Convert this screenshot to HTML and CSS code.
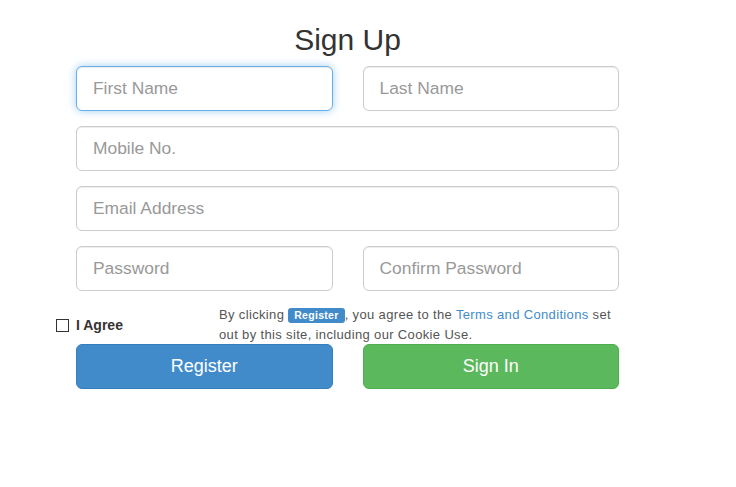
FILE: index.html
```html
<!DOCTYPE html>
<html lang="en">
<head>
<meta charset="utf-8">
<title>Sign Up</title>
<link rel="stylesheet" href="styles.css">
</head>
<body>
<main class="page">
  <h2 class="title">Sign Up</h2>
  <form class="signup-form">
    <div class="row two">
      <input class="field is-focused" type="text" placeholder="First Name">
      <input class="field" type="text" placeholder="Last Name">
    </div>
    <div class="row">
      <input class="field" type="text" placeholder="Mobile No.">
    </div>
    <div class="row">
      <input class="field" type="email" placeholder="Email Address">
    </div>
    <div class="row two">
      <input class="field" type="password" placeholder="Password">
      <input class="field" type="password" placeholder="Confirm Password">
    </div>
    <div class="agree-row">
      <label class="agree"><input class="check" type="checkbox"><span>I Agree</span></label>
      <p class="terms">By clicking <span class="badge">Register</span>, you agree to the <a class="link" href="#">Terms and Conditions</a> set out by this site, including our Cookie Use.</p>
    </div>
    <div class="row two">
      <button class="btn btn-primary" type="button">Register</button>
      <button class="btn btn-success" type="button">Sign In</button>
    </div>
  </form>
</main>
</body>
</html>
```

FILE: styles.css
```css
html, body {
  margin: 0;
  padding: 0;
  background: #fff;
}
body {
  font-family: "Liberation Sans", Arial, Helvetica, sans-serif;
  font-size: 14px;
  line-height: 20px;
  color: #333;
}
.page {
  width: 543px;
  padding: 23px 0 0 76px;
}
.title {
  margin: 0 0 10px;
  font-size: 30px;
  line-height: 33px;
  font-weight: 500;
  text-align: center;
  color: #333;
}
.signup-form {
  display: flex;
  flex-direction: column;
}
.row {
  display: grid;
  grid-template-columns: 1fr;
  margin-bottom: 15px;
}
.row.two {
  grid-template-columns: 1fr 1fr;
  column-gap: 30px;
}
.field {
  box-sizing: border-box;
  height: 45px;
  width: 100%;
  margin: 0;
  padding: 0 16px;
  font-family: "Liberation Sans", Arial, sans-serif;
  font-size: 17.4px;
  color: #555;
  background: #fff;
  border: 1px solid #ccc;
  border-radius: 6px;
  box-shadow: inset 0 1px 1px rgba(0, 0, 0, 0.075);
  outline: none;
}
.field::placeholder {
  color: #999;
}
.field.is-focused {
  border-color: #66afe9;
  box-shadow: inset 0 1px 1px rgba(0, 0, 0, 0.075), 0 0 8px rgba(102, 175, 233, 0.6);
}
.agree-row {
  display: grid;
  grid-template-columns: 143px 1fr;
  margin: -2px 0 0;
  height: 40px;
}
.agree {
  display: flex;
  align-items: center;
  margin-left: -20px;
  padding-top: 1px;
  font-weight: bold;
  font-size: 14px;
}
.check {
  appearance: none;
  -webkit-appearance: none;
  box-sizing: border-box;
  width: 13px;
  height: 13px;
  margin: 0 7px 0 0;
  border: 1px solid #333;
  background: #fff;
}
.terms {
  margin: 0;
  padding-top: 1px;
  font-size: 13px;
  line-height: 20px;
  letter-spacing: 0.35px;
  color: #555;
}
.badge {
  display: inline-block;
  padding: 2px 6px 2px;
  font-size: 10.5px;
  line-height: 1;
  font-weight: bold;
  letter-spacing: 0.3px;
  color: #fff;
  background: #428bca;
  border-radius: 3px;
  vertical-align: 0;
}
.link {
  color: #428bca;
  text-decoration: none;
}
.btn {
  box-sizing: border-box;
  height: 45px;
  margin: 0;
  font-family: "Liberation Sans", Arial, sans-serif;
  font-size: 18px;
  color: #fff;
  border-radius: 6px;
  border: 1px solid transparent;
  cursor: pointer;
}
.btn-primary {
  background: #428bca;
  border-color: #357ebd;
}
.btn-success {
  background: #5cb85c;
  border-color: #4cae4c;
}
```
